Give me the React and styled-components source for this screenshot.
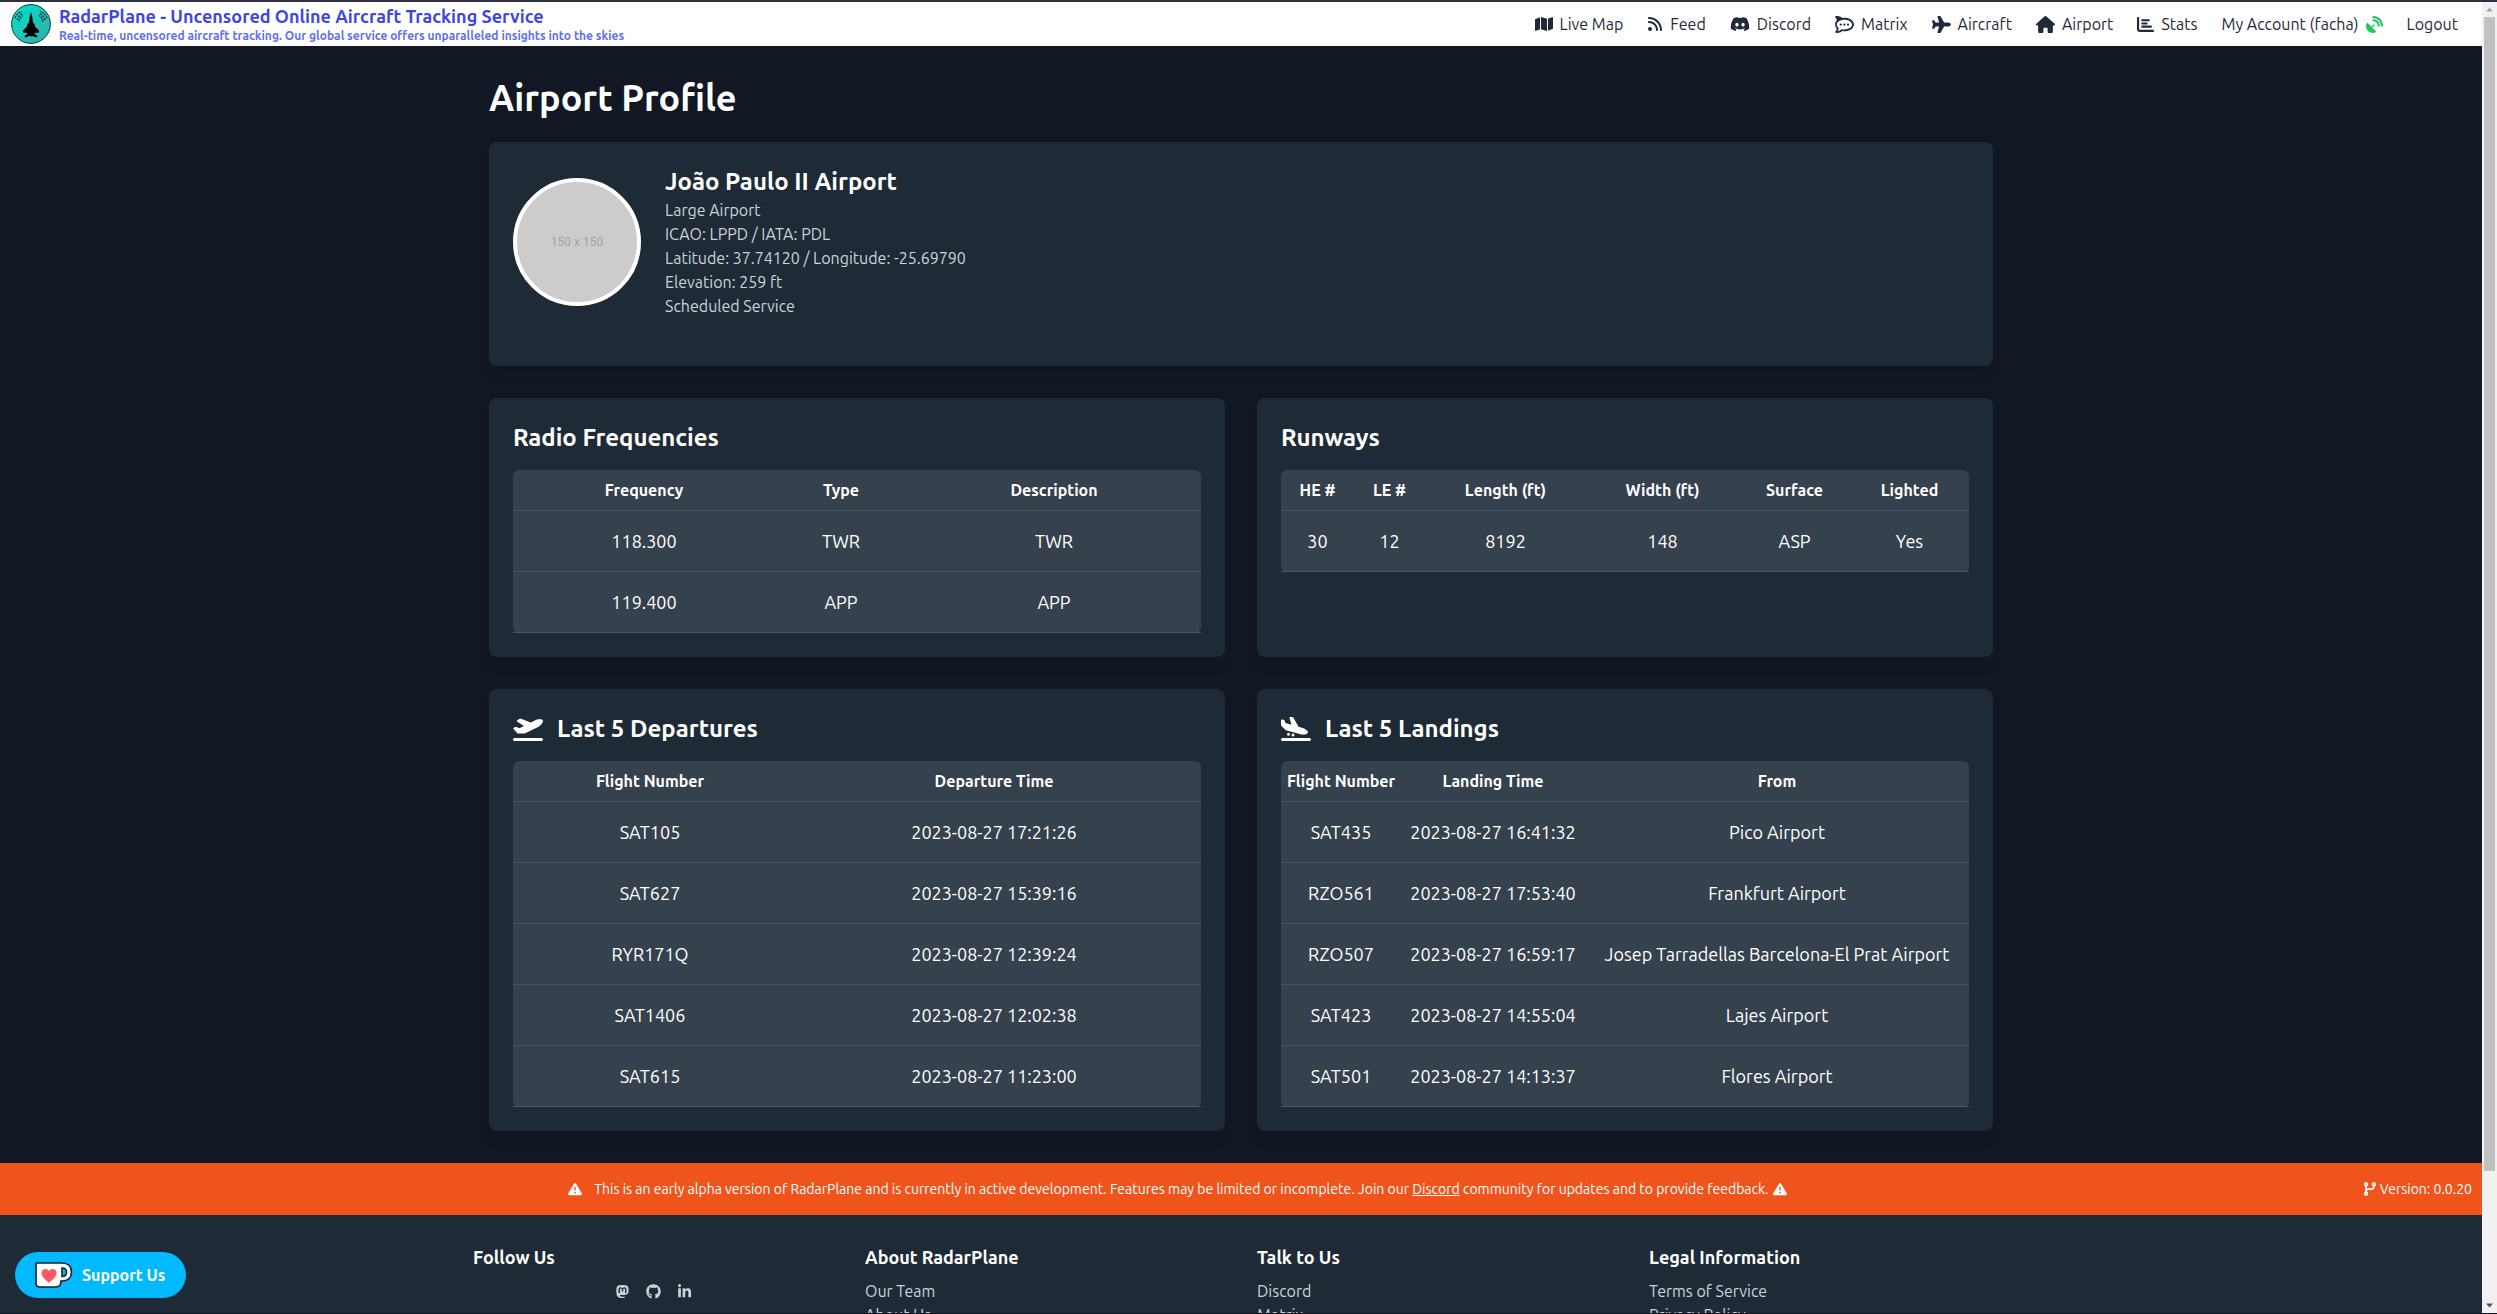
import React from "react";
import styled, { createGlobalStyle } from "styled-components";
import {
  FaMap, FaRss, FaDiscord, FaRocketchat, FaPlane, FaHouse, FaChartBar, FaSatelliteDish,
  FaPlaneDeparture, FaPlaneArrival, FaTriangleExclamation, FaCodeBranch,
  FaMastodon, FaGithub, FaLinkedinIn,
} from "react-icons/fa6";

const c = {
  ink: "#1f2937",
  page: "#111824",
  card: "#1e2a35",
  table: "#36414e",
  line: "#485563",
  muted: "#cdd2d9",
  frame: "#2f3142",
  orange: "#ee541c",
};

const GlobalStyle = createGlobalStyle`
  *, *::before, *::after { box-sizing: border-box; }
  body {
    margin: 0;
    background: ${c.page};
    color: #fff;
    font: 16px/24px Ubuntu, "Noto Sans", sans-serif;
  }
  h1, h2, p, ul { margin: 0; padding: 0; }
  ul { list-style: none; }
  a { color: inherit; text-decoration: none; }
  svg { display: block; flex: none; }
`;

const Frame = styled.div`
  height: 100vh;
  display: grid;
  grid-template-columns: 1fr 15px;
  border-top: 2px solid ${c.frame};
  border-bottom: 1px solid ${c.page};
  overflow: hidden;
`;

const Page = styled.div`
  min-width: 0;
  min-height: 0;
  overflow: hidden;
`;

const Header = styled.header`
  display: flex;
  align-items: center;
  justify-content: space-between;
  height: 44px;
  padding: 0 24px 0 11px;
  background: #fff;
  color: ${c.ink};
`;

const Brand = styled.a`
  display: flex;
  align-items: center;
  gap: 8px;
`;

const BrandName = styled.p`
  color: #4046e0;
  font-size: 18px;
  font-weight: 700;
  line-height: 24px;
`;

const BrandTagline = styled.p`
  color: #6170f0;
  font-size: 12px;
  font-weight: 700;
  line-height: 16px;
`;

const Nav = styled.nav`
  display: flex;
  gap: 24px;
`;

const NavLink = styled.a`
  display: flex;
  align-items: center;
  gap: 7px;
`;

const LiveMark = styled.span`
  color: #22c55e;
`;

const Main = styled.main`
  display: grid;
  gap: 32px;
  max-width: 1536px;
  margin: 0 auto;
  padding: 32px 16px;
`;

const Intro = styled.div`
  display: grid;
  gap: 24px;
`;

const PageTitle = styled.h1`
  font-size: 36px;
  line-height: 40px;
`;

const Card = styled.section`
  padding: 24px;
  border-radius: 8px;
  background: ${c.card};
  box-shadow: 0 10px 15px -3px rgba(0, 0, 0, 0.1);
`;

const Profile = styled.div`
  display: flex;
  align-items: center;
  gap: 24px;
  margin-bottom: 24px;
`;

const Avatar = styled.div`
  display: grid;
  place-items: center;
  width: 128px;
  height: 128px;
  border: 4px solid #fff;
  border-radius: 50%;
  background: #ccc;
  color: #a3a3a3;
  font: 12px/16px Roboto, sans-serif;
`;

const ProfileText = styled.div`
  color: ${c.muted};
`;

const CardTitle = styled.h2`
  display: flex;
  align-items: center;
  gap: 14px;
  color: #fff;
  font-size: 24px;
  line-height: 32px;
`;

const Columns = styled.div`
  display: grid;
  grid-template-columns: 1fr 1fr;
  gap: 32px;
`;

const Table = styled.table`
  width: 100%;
  margin-top: 16px;
  border-spacing: 0;
  border-radius: 6px;
  background: ${c.table};
  table-layout: fixed;
  text-align: center;
`;

const Col = styled.col`
  width: ${(p) => p.$share}%;
`;

const Th = styled.th`
  padding: 8px 4px;
  border-bottom: 1px solid ${c.line};
  white-space: nowrap;
`;

const Td = styled.td`
  padding: 16px 4px;
  border-bottom: 1px solid ${c.line};
  font-size: 18px;
  line-height: 28px;
  white-space: nowrap;
`;

const Banner = styled.div`
  display: flex;
  align-items: center;
  gap: 8px;
  padding: 16px 10px 16px 0;
  background: ${c.orange};
  font-size: 14px;
  line-height: 20px;
`;

const Notice = styled.p`
  display: flex;
  flex: 1;
  align-items: center;
  justify-content: center;
  gap: 4px;
  & > svg:first-child { margin-right: 8px; }
`;

const DiscordLink = styled.a`
  text-decoration: underline;
`;

const Version = styled.span`
  display: flex;
  align-items: center;
  gap: 3px;
`;

const Footer = styled.footer`
  padding: 28px 0;
  background: ${c.card};
`;

const FooterGrid = styled.div`
  display: grid;
  grid-template-columns: repeat(4, 1fr);
  gap: 32px;
  max-width: 1536px;
  margin: 0 auto;
`;

const FooterTitle = styled.h2`
  margin-bottom: 8px;
  font-size: 18px;
  line-height: 28px;
`;

const FooterLinks = styled.ul`
  color: ${c.muted};
`;

const Social = styled.div`
  display: flex;
  justify-content: center;
  align-items: center;
  gap: 16px;
  height: 24px;
  color: ${c.muted};
`;

const SupportButton = styled.button`
  position: fixed;
  bottom: 16px;
  left: 15px;
  display: flex;
  align-items: center;
  gap: 8px;
  height: 46px;
  padding: 0 21px 0 19px;
  border: 0;
  border-radius: 23px;
  background: #00b9fe;
  color: #fff;
  font: 700 16px/24px Ubuntu, "Noto Sans", sans-serif;
`;

const ScrollTrack = styled.div`
  display: flex;
  flex-direction: column;
  align-items: center;
  justify-content: space-between;
  background: #f1f1f1;
`;

const ScrollThumb = styled.div`
  flex: 0 0 88%;
  width: 11px;
  margin-bottom: auto;
  background: #c1c1c1;
`;

const ScrollArrow = styled.svg`
  width: 15px;
  height: 15px;
`;

function Logo() {
  return (
    <svg width="40" height="40" viewBox="0 0 40 40" aria-hidden="true">
      <defs>
        <linearGradient id="teal" x1="0" y1="0" x2="1" y2="1">
          <stop offset="0" stopColor="#00e5d0" />
          <stop offset="1" stopColor="#35a9a5" />
        </linearGradient>
      </defs>
      <circle cx="20" cy="20" r="19.4" fill="url(#teal)" stroke="#123c40" strokeWidth="1" />
      <path
        fill="#000"
        d="M20 8L21.200 12.500L22 18.500L23.500 20L24.300 23L28 26.500V28.500L23.500 29L23.800 30L26.500 32L25.500 33.500L21.500 32L20 32.500L18.500 32L14.500 33.500L13.500 32L16.200 30L16.500 29L12 28.500V26.500L15.700 23L16.500 20L18 18.500L18.800 12.500Z"
      />
      <g fill="none" stroke="#06302f" strokeWidth="1.300" strokeDasharray="2 1">
        <path d="M4 14q2-5 7-6.500M6 16q2-5 6-6.500M8 17.500q1-4 4-6" />
        <path d="M36 14q-2-5-7-6.500M34 16q-2-5-6-6.500M32 17.500q-1-4-4-6" />
      </g>
    </svg>
  );
}

function Mug() {
  return (
    <svg width="40" height="28" viewBox="0 0 40 28" aria-hidden="true">
      <path d="M3 2h25c6 0 9.500 3.500 9.500 9S34 20 28 20h-1c0 4-2 6-5 6H6c-3 0-4-1-4-4V3c0-.6.400-1 1-1z" fill="#fff" stroke="#1b2024" strokeWidth="1.600" />
      <path d="M28 7c3.500 0 4.500 1.500 4.500 4s-1 4.500-4.500 4.500z" fill="#00b9fe" stroke="#1b2024" strokeWidth="1.600" />
      <path d="M15 22c-3-3-7.500-6-7.500-10 0-2.500 1.800-4 4-4 1.500 0 2.800.8 3.500 2 .7-1.200 2-2 3.500-2 2.200 0 4 1.500 4 4 0 4-4.500 7-7.500 10z" fill="#ff5a64" />
    </svg>
  );
}

const navItems = [
  ["Live Map", FaMap, 18],
  ["Feed", FaRss, 16],
  ["Discord", FaDiscord, 20],
  ["Matrix", FaRocketchat, 19],
  ["Aircraft", FaPlane, 19],
  ["Airport", FaHouse, 19],
  ["Stats", FaChartBar, 17],
];

function DataTable({ shares, head, rows }) {
  const total = shares.reduce((a, b) => a + b, 0);
  return (
    <Table>
      <colgroup>
        {shares.map((s, i) => <Col key={i} $share={(s / total) * 100} />)}
      </colgroup>
      <thead>
        <tr>{head.map((h) => <Th key={h} scope="col">{h}</Th>)}</tr>
      </thead>
      <tbody>
        {rows.map((r) => (
          <tr key={r.join()}>{r.map((v, i) => <Td key={i}>{v}</Td>)}</tr>
        ))}
      </tbody>
    </Table>
  );
}

const footerColumns = [
  ["About RadarPlane", ["Our Team", "About Us"]],
  ["Talk to Us", ["Discord", "Matrix"]],
  ["Legal Information", ["Terms of Service", "Privacy Policy"]],
];

export default function App() {
  return (
    <>
      <GlobalStyle />
      <Frame>
        <Page>
          <Header>
            <Brand href="#">
              <Logo />
              <div>
                <BrandName>RadarPlane - Uncensored Online Aircraft Tracking Service</BrandName>
                <BrandTagline>Real-time, uncensored aircraft tracking. Our global service offers unparalleled insights into the skies</BrandTagline>
              </div>
            </Brand>
            <Nav>
              {navItems.map(([label, Icon, size]) => (
                <NavLink href="#" key={label}><Icon size={size} />{label}</NavLink>
              ))}
              <NavLink href="#">My Account (facha) <LiveMark><FaSatelliteDish size={17} /></LiveMark></NavLink>
              <NavLink href="#">Logout</NavLink>
            </Nav>
          </Header>
          <Main>
            <Intro>
              <PageTitle>Airport Profile</PageTitle>
              <Card>
                <Profile>
                  <Avatar>150 x 150</Avatar>
                  <ProfileText>
                    <CardTitle>João Paulo II Airport</CardTitle>
                    <p>Large Airport</p>
                    <p>ICAO: LPPD / IATA: PDL</p>
                    <p>Latitude: 37.74120 / Longitude: -25.69790</p>
                    <p>Elevation: 259 ft</p>
                    <p>Scheduled Service</p>
                  </ProfileText>
                </Profile>
              </Card>
            </Intro>
            <Columns>
              <Card>
                <CardTitle>Radio Frequencies</CardTitle>
                <DataTable
                  shares={[262, 132, 294]}
                  head={["Frequency", "Type", "Description"]}
                  rows={[["118.300", "TWR", "TWR"], ["119.400", "APP", "APP"]]}
                />
              </Card>
              <Card>
                <CardTitle>Runways</CardTitle>
                <DataTable
                  shares={[73, 71, 161, 153, 111, 119]}
                  head={["HE #", "LE #", "Length (ft)", "Width (ft)", "Surface", "Lighted"]}
                  rows={[["30", "12", "8192", "148", "ASP", "Yes"]]}
                />
              </Card>
              <Card>
                <CardTitle><FaPlaneDeparture size={30} />Last 5 Departures</CardTitle>
                <DataTable
                  shares={[274, 414]}
                  head={["Flight Number", "Departure Time"]}
                  rows={[
                    ["SAT105", "2023-08-27 17:21:26"],
                    ["SAT627", "2023-08-27 15:39:16"],
                    ["RYR171Q", "2023-08-27 12:39:24"],
                    ["SAT1406", "2023-08-27 12:02:38"],
                    ["SAT615", "2023-08-27 11:23:00"],
                  ]}
                />
              </Card>
              <Card>
                <CardTitle><FaPlaneArrival size={30} />Last 5 Landings</CardTitle>
                <DataTable
                  shares={[120, 184, 384]}
                  head={["Flight Number", "Landing Time", "From"]}
                  rows={[
                    ["SAT435", "2023-08-27 16:41:32", "Pico Airport"],
                    ["RZO561", "2023-08-27 17:53:40", "Frankfurt Airport"],
                    ["RZO507", "2023-08-27 16:59:17", "Josep Tarradellas Barcelona-El Prat Airport"],
                    ["SAT423", "2023-08-27 14:55:04", "Lajes Airport"],
                    ["SAT501", "2023-08-27 14:13:37", "Flores Airport"],
                  ]}
                />
              </Card>
            </Columns>
          </Main>
          <Banner>
            <Notice>
              <FaTriangleExclamation size={14} />
              <span>
                This is an early alpha version of RadarPlane and is currently in active development. Features may be limited or incomplete. Join our{" "}
                <DiscordLink href="#">Discord</DiscordLink> community for updates and to provide feedback.
              </span>
              <FaTriangleExclamation size={14} />
            </Notice>
            <Version><FaCodeBranch size={14} />Version: 0.0.20</Version>
          </Banner>
          <Footer>
            <FooterGrid>
              <div>
                <FooterTitle>Follow Us</FooterTitle>
                <Social>
                  <a href="#" aria-label="Mastodon"><FaMastodon size={15} /></a>
                  <a href="#" aria-label="GitHub"><FaGithub size={15} /></a>
                  <a href="#" aria-label="LinkedIn"><FaLinkedinIn size={15} /></a>
                </Social>
              </div>
              {footerColumns.map(([title, links]) => (
                <div key={title}>
                  <FooterTitle>{title}</FooterTitle>
                  <FooterLinks>
                    {links.map((l) => <li key={l}><a href="#">{l}</a></li>)}
                  </FooterLinks>
                </div>
              ))}
            </FooterGrid>
          </Footer>
        </Page>
        <ScrollTrack aria-hidden="true">
          <ScrollArrow viewBox="0 0 15 15"><path d="M4 9.500l3.500-4 3.500 4z" fill="#a3a3a3" /></ScrollArrow>
          <ScrollThumb />
          <ScrollArrow viewBox="0 0 15 15"><path d="M4 5.500l3.500 4 3.500-4z" fill="#505050" /></ScrollArrow>
        </ScrollTrack>
      </Frame>
      <SupportButton type="button"><Mug />Support Us</SupportButton>
    </>
  );
}
